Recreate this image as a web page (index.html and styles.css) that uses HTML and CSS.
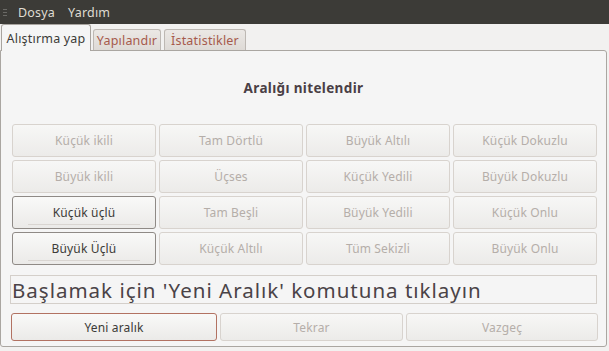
FILE: index.html
```html
<!DOCTYPE html>
<html lang="tr">
<head>
<meta charset="utf-8">
<link rel="stylesheet" href="styles.css">
</head>
<body>
<div class="menubar">
  <div class="grip"><span></span><span></span><span></span></div>
  <span class="menu-item">Dosya</span>
  <span class="menu-item">Yardım</span>
</div>
<div class="tabs">
  <div class="tab active">Alıştırma yap</div>
  <div class="tab t-config">Yapılandır</div>
  <div class="tab t-stats">İstatistikler</div>
</div>
<div class="panel">
  <div class="title">Aralığı nitelendir</div>
  <div class="grid">
    <div class="btn disabled">Küçük ikili</div>
    <div class="btn disabled">Tam Dörtlü</div>
    <div class="btn disabled">Büyük Altılı</div>
    <div class="btn disabled">Küçük Dokuzlu</div>
    <div class="btn disabled">Büyük ikili</div>
    <div class="btn disabled">Üçses</div>
    <div class="btn disabled">Küçük Yedili</div>
    <div class="btn disabled">Büyük Dokuzlu</div>
    <div class="btn enabled">Küçük üçlü</div>
    <div class="btn disabled">Tam Beşli</div>
    <div class="btn disabled">Büyük Yedili</div>
    <div class="btn disabled">Küçük Onlu</div>
    <div class="btn enabled">Büyük Üçlü</div>
    <div class="btn disabled">Küçük Altılı</div>
    <div class="btn disabled">Tüm Sekizli</div>
    <div class="btn disabled">Büyük Onlu</div>
  </div>
  <div class="message">Başlamak için 'Yeni Aralık' komutuna tıklayın</div>
  <div class="actions">
    <div class="btn focused b-new">Yeni aralık</div>
    <div class="btn disabled b-repeat">Tekrar</div>
    <div class="btn disabled b-cancel">Vazgeç</div>
  </div>
</div>
</body>
</html>
```
FILE: styles.css
```css
html, body {
  margin: 0;
  padding: 0;
}
body {
  width: 609px;
  height: 351px;
  overflow: hidden;
  background: #f2f1f0;
  font-family: "Noto Sans", "DejaVu Sans", sans-serif;
  font-size: 12px;
  color: #3c3b37;
}
.menubar {
  height: 24px;
  background: #3c3b37;
  display: flex;
  align-items: center;
  color: #dfdbd2;
  font-size: 12.5px;
}
.grip {
  width: 8px;
  height: 100%;
  display: flex;
  flex-direction: column;
  justify-content: center;
  gap: 2px;
  padding-left: 3px;
  box-sizing: border-box;
}
.grip span {
  display: block;
  width: 4px;
  height: 1px;
  background: #6b6a66;
}
.menu-item {
  margin-left: 10px;
  margin-right: 3px;
  letter-spacing: 0.2px;
}
.tabs {
  height: 26px;
  display: flex;
  align-items: flex-end;
  padding-left: 1px;
  gap: 2px;
  position: relative;
  z-index: 1;
}
.tab {
  height: 21px;
  box-sizing: border-box;
  border: 1px solid #bdb8b3;
  border-bottom: none;
  border-radius: 3px 3px 0 0;
  background: linear-gradient(#ebe8e5, #dedad6);
  color: #a65a4c;
  font-size: 12.5px;
  letter-spacing: 0.2px;
  display: flex;
  align-items: center;
  justify-content: center;
}
.t-config { width: 68px; }
.t-stats { width: 82px; margin-left: 1px; }
.tab.active {
  width: 90px;
  height: 27px;
  margin-bottom: -1px;
  background: #f5f5f5;
  border-color: #a8a49f;
  color: #3c3b37;
}
.panel {
  width: 607px;
  height: 297px;
  box-sizing: border-box;
  border: 1px solid #aaa6a1;
  border-radius: 0 3px 3px 3px;
  background: #f5f5f5;
  display: flex;
  flex-direction: column;
}
.title {
  height: 73px;
  display: flex;
  align-items: center;
  justify-content: center;
  font-weight: bold;
  font-size: 13.5px;
  letter-spacing: 0.35px;
  color: #4a3f45;
}
.grid {
  margin-left: 11px;
  width: 585px;
  display: grid;
  grid-template-columns: repeat(4, 144px);
  grid-auto-rows: 33px;
  gap: 3px;
}
.btn {
  box-sizing: border-box;
  border: 1px solid #d8d3ce;
  border-radius: 3px;
  background: linear-gradient(#f7f7f6, #ecebe9);
  display: flex;
  align-items: center;
  justify-content: center;
  font-size: 12px;
  letter-spacing: 0.15px;
  color: #b5aea9;
}
.btn.enabled {
  position: relative;
  border-color: #8f8a86;
  color: #3c3b37;
  background: linear-gradient(#f9f9f8, #ebeae8);
}
.btn.enabled::after {
  content: "";
  position: absolute;
  left: 15px;
  right: 15px;
  bottom: 3px;
  height: 1px;
  background: #d9d5d1;
}
.btn.focused {
  border-color: #b27262;
  color: #3c3b37;
  background: linear-gradient(#f9f9f8, #ebeae8);
}
.message {
  margin: 10px 0 0 9px;
  width: 587px;
  height: 29px;
  box-sizing: border-box;
  border: 1px solid #d4cfca;
  background: #f5f5f5;
  font-size: 20.5px;
  color: #4a4347;
  display: flex;
  align-items: center;
  padding-left: 1px;
  letter-spacing: 1px;
}
.actions {
  margin: 9px 0 0 10px;
  display: flex;
  gap: 3px;
  height: 28px;
}
.b-new { width: 206px; }
.b-repeat { width: 183px; }
.b-cancel { width: 192px; }
```
